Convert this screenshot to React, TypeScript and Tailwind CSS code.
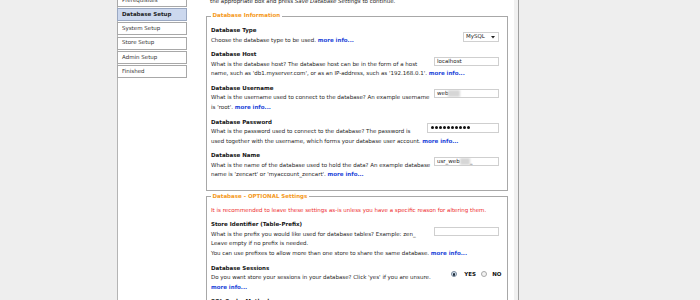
import React from "react";

const More = () => <span className="font-bold text-[#2346d9]">more info...</span>;

const Label = ({ children }: { children: React.ReactNode }) => (
  <div className="font-bold text-[#141414]">{children}</div>
);

const Blur = ({ w }: { w: string }) => (
  <span className={`inline-block h-[7px] ${w} bg-[#d6d6d6] blur-[0.8px]`} />
);

function Field({ children, mt }: { children?: React.ReactNode; mt: string }) {
  return (
    <div
      className={`${mt} flex h-[9px] w-[65px] shrink-0 items-center overflow-hidden border border-[#cfcfcf] bg-white pl-[2px] text-[#222]`}
    >
      {children}
    </div>
  );
}

const sideItems = ["Prerequisites", "Database Setup", "System Setup", "Store Setup", "Admin Setup", "Finished"];

export default function App() {
  return (
    <div className="h-[300px] w-[700px] overflow-hidden bg-[#eeeeee] font-['DejaVu_Sans',sans-serif] text-[5.5px] leading-[9.5px] text-[#262626]">
      <div className="ml-[117px] flex h-[300px] w-[402px] border-l border-r border-l-[#b4b4b4] border-r-[#a0a0a0] bg-white shadow-[inset_-4px_0_0_#f1f1f1]">
        {/* sidebar */}
        <div className="-ml-px mt-[-6.25px] flex w-[70px] shrink-0 flex-col gap-[1.25px] self-start">
          {sideItems.map((s) =>
            s === "Database Setup" ? (
              <div
                key={s}
                className="flex h-[13px] items-center border border-[#9aa8c2] bg-[#ccd8ee] pl-[4px] font-bold text-[#1e1e1e]"
              >
                {s}
              </div>
            ) : (
              <div
                key={s}
                className="flex h-[13px] items-center border border-[#a8a8a8] bg-white pl-[4px] text-[#333]"
              >
                {s}
              </div>
            )
          )}
        </div>

        {/* main */}
        <div className="ml-[19px] w-[302px] shrink-0">
          <p className="mt-[-12.5px] whitespace-nowrap pl-[4px]">
            Please enter your database settings below. If you are unsure, tick
            <br />
            the appropriate box and press <i>Save Database Settings</i> to continue.
          </p>

          <fieldset className="mt-[4.75px] border border-[#a8a8a8] pb-[10.5px] pl-[4px] pr-[8px] pt-[5.25px]">
            <legend className="px-[1.5px] font-bold text-[#f59a23]">Database Information</legend>
            <div className="flex flex-col gap-[5.2px] whitespace-nowrap">
              {/* type */}
              <div className="flex items-start">
                <div className="flex-1">
                  <Label>Database Type</Label>
                  <div>
                    Choose the database type to be used. <More />
                  </div>
                </div>
                <div className="mt-[6px] flex h-[10px] w-[36px] shrink-0 items-center justify-between border border-[#d0d0d0] bg-white pl-[2px] pr-[3px] text-[#222]">
                  <span>MySQL</span>
                  <svg width="4" height="3" viewBox="0 0 4 3">
                    <path d="M0 0 L4 0 L2 2.6 Z" fill="#222" />
                  </svg>
                </div>
              </div>

              {/* host */}
              <div>
                <div className="flex items-start">
                  <div className="flex-1">
                    <Label>Database Host</Label>
                    <div>What is the database host? The database host can be in the form of a host</div>
                  </div>
                  <Field mt="mt-[7px]">localhost</Field>
                </div>
                <div>
                  name, such as 'db1.myserver.com', or as an IP-address, such as '192.168.0.1'. <More />
                </div>
              </div>

              {/* username */}
              <div>
                <div className="flex items-start">
                  <div className="flex-1">
                    <Label>Database Username</Label>
                    <div>What is the username used to connect to the database? An example username</div>
                  </div>
                  <Field mt="mt-[5px]">
                    web
                    <Blur w="w-[12px]" />
                  </Field>
                </div>
                <div>
                  is 'root'. <More />
                </div>
              </div>

              {/* password */}
              <div>
                <div className="flex items-start">
                  <div className="flex-1">
                    <Label>Database Password</Label>
                    <div>What is the password used to connect to the database? The password is</div>
                  </div>
                  <div className="mt-[5px] flex h-[10px] w-[72px] shrink-0 items-center gap-[1px] border border-[#cfcfcf] bg-white pl-[3px]">
                    {Array.from({ length: 10 }).map((_, i) => (
                      <span key={i} className="h-[3px] w-[3px] rounded-full bg-[#111]" />
                    ))}
                  </div>
                </div>
                <div>
                  used together with the username, which forms your database user account. <More />
                </div>
              </div>

              {/* name */}
              <div>
                <div className="flex items-start">
                  <div className="flex-1">
                    <Label>Database Name</Label>
                    <div>What is the name of the database used to hold the data? An example database</div>
                  </div>
                  <Field mt="mt-[6px]">
                    usr_web
                    <Blur w="w-[10px]" />
                    <span>_</span>
                  </Field>
                </div>
                <div>
                  name is 'zencart' or 'myaccount_zencart'. <More />
                </div>
              </div>
            </div>
          </fieldset>

          <fieldset className="mt-[0.5px] border border-[#a8a8a8] pb-[8px] pl-[4px] pr-[8px] pt-[4.5px]">
            <legend className="px-[1.5px] font-bold text-[#f59a23]">Database - OPTIONAL Settings</legend>
            <div className="flex flex-col gap-[5.2px] whitespace-nowrap">
              <div className="text-[#ee2a2a]">
                It is recommended to leave these settings as-is unless you have a specific reason for altering them.
              </div>

              {/* store identifier */}
              <div>
                <div className="flex items-start">
                  <div className="flex-1">
                    <Label>Store Identifier (Table-Prefix)</Label>
                    <div>What is the prefix you would like used for database tables? Example: zen_</div>
                  </div>
                  <Field mt="mt-[6.5px]" />
                </div>
                <div>Leave empty if no prefix is needed.</div>
                <div>
                  You can use prefixes to allow more than one store to share the same database. <More />
                </div>
              </div>

              {/* sessions */}
              <div>
                <div className="flex items-start">
                  <div className="flex-1">
                    <Label>Database Sessions</Label>
                    <div>Do you want store your sessions in your database? Click 'yes' if you are unsure.</div>
                  </div>
                  <div className="-mr-[2.5px] mt-[6px] flex shrink-0 items-center">
                    <span className="flex h-[6px] w-[6px] items-center justify-center rounded-full border border-[#7a8a9c] bg-[#d7e2ee]">
                      <span className="h-[2.5px] w-[2.5px] rounded-full bg-[#1d2b3a]" />
                    </span>
                    <span className="ml-[7px] font-bold text-[#111]">YES</span>
                    <span className="ml-[5.3px] h-[6px] w-[6px] rounded-full border border-[#a8a8a8] bg-[#f3f3f3]" />
                    <span className="ml-[5px] font-bold text-[#111]">NO</span>
                  </div>
                </div>
                <div>
                  <More />
                </div>
              </div>

              {/* sql cache */}
              <div>
                <Label>SQL Cache Method</Label>
                <div>Select the method to use for SQL caching.</div>
              </div>
            </div>
          </fieldset>
        </div>
      </div>
    </div>
  );
}
